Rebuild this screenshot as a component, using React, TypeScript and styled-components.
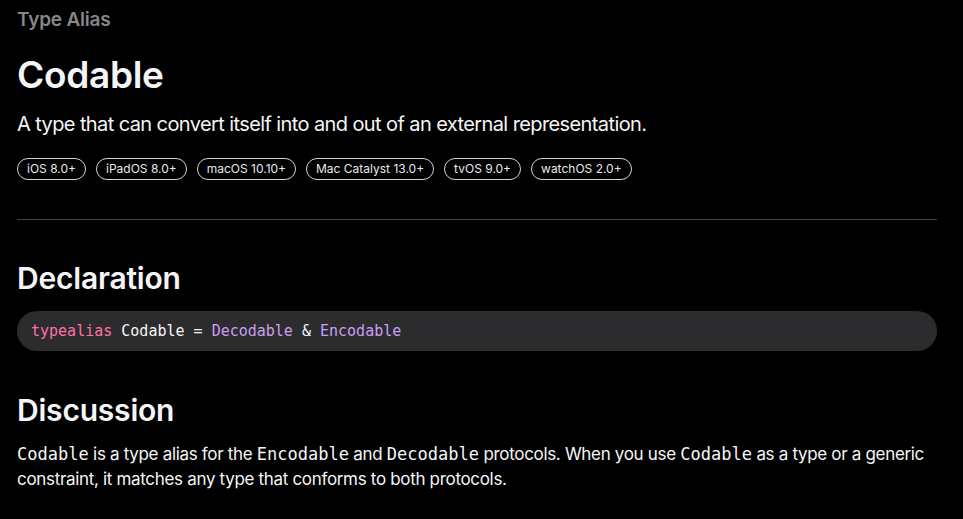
import React from "react";
import styled, { createGlobalStyle } from "styled-components";

const GlobalStyle = createGlobalStyle`
  html, body {
    margin: 0;
    padding: 0;
    background: #000;
  }
  body {
    font-family: Inter, "Noto Sans", sans-serif;
    color: #f5f5f7;
    -webkit-font-smoothing: antialiased;
  }
`;

const Page = styled.main`
  box-sizing: border-box;
  width: 963px;
  padding: 8px 26px 0 17px;
`;

const Eyebrow = styled.div`
  font-size: 19px;
  font-weight: 600;
  color: #86868b;
  line-height: 24px;
  letter-spacing: -0.2px;
`;

const Title = styled.h1`
  font-size: 37px;
  font-weight: 600;
  line-height: 44px;
  margin: 21px 0 0;
  letter-spacing: -0.3px;
`;

const Abstract = styled.p`
  font-size: 20px;
  line-height: 26px;
  margin: 14px 0 0;
  letter-spacing: -0.6px;
  font-weight: 400;
`;

const Badges = styled.ul`
  list-style: none;
  display: flex;
  gap: 10px;
  margin: 21px 0 0;
  padding: 0;
`;

const Badge = styled.li`
  font-size: 12px;
  line-height: 20px;
  padding: 0 9px;
  border: 1px solid #d2d2d7;
  border-radius: 11px;
  color: #e8e8ed;
`;

const Divider = styled.hr`
  border: none;
  border-top: 1px solid #424245;
  margin: 39px 0 0;
`;

const SectionTitle = styled.h2<{ $gap: number }>`
  font-size: 30px;
  font-weight: 600;
  line-height: 36px;
  margin: ${({ $gap }) => $gap}px 0 0;
  letter-spacing: -0.2px;
`;

const CodeBlock = styled.pre`
  margin: 15px 0 0;
  background: #2c2c2e;
  border-radius: 20px;
  height: 40px;
  box-sizing: border-box;
  padding: 0 14px;
  display: flex;
  align-items: center;
  font-family: "DejaVu Sans Mono", "Liberation Mono", monospace;
  font-size: 15px;
  color: #f5f5f7;
`;

const Token = styled.span<{ $kind: "keyword" | "type" }>`
  color: ${({ $kind }) => ($kind === "keyword" ? "#ff6fa8" : "#cb9ff2")};
`;

const Paragraph = styled.p`
  font-size: 17px;
  line-height: 25px;
  margin: 14px 0 0;
  letter-spacing: -0.32px;
`;

const InlineCode = styled.code`
  font-family: "DejaVu Sans Mono", "Liberation Mono", monospace;
  font-size: 17px;
  letter-spacing: 0;
`;

const platforms = [
  "iOS 8.0+",
  "iPadOS 8.0+",
  "macOS 10.10+",
  "Mac Catalyst 13.0+",
  "tvOS 9.0+",
  "watchOS 2.0+",
];

export default function App() {
  return (
    <>
      <GlobalStyle />
      <Page>
        <Eyebrow>Type Alias</Eyebrow>
        <Title>Codable</Title>
        <Abstract>
          A type that can convert itself into and out of an external representation.
        </Abstract>
        <Badges>
          {platforms.map((p) => (
            <Badge key={p}>{p}</Badge>
          ))}
        </Badges>
        <Divider />
        <SectionTitle $gap={40}>Declaration</SectionTitle>
        <CodeBlock>
          <Token $kind="keyword">typealias</Token>&nbsp;Codable = <Token $kind="type">Decodable</Token>
          &nbsp;&amp;&nbsp;<Token $kind="type">Encodable</Token>
        </CodeBlock>
        <SectionTitle $gap={41}>Discussion</SectionTitle>
        <Paragraph>
          <InlineCode>Codable</InlineCode> is a type alias for the <InlineCode>Encodable</InlineCode> and{" "}
          <InlineCode>Decodable</InlineCode> protocols. When you use <InlineCode>Codable</InlineCode> as a type
          or a generic constraint, it matches any type that conforms to both protocols.
        </Paragraph>
      </Page>
    </>
  );
}
